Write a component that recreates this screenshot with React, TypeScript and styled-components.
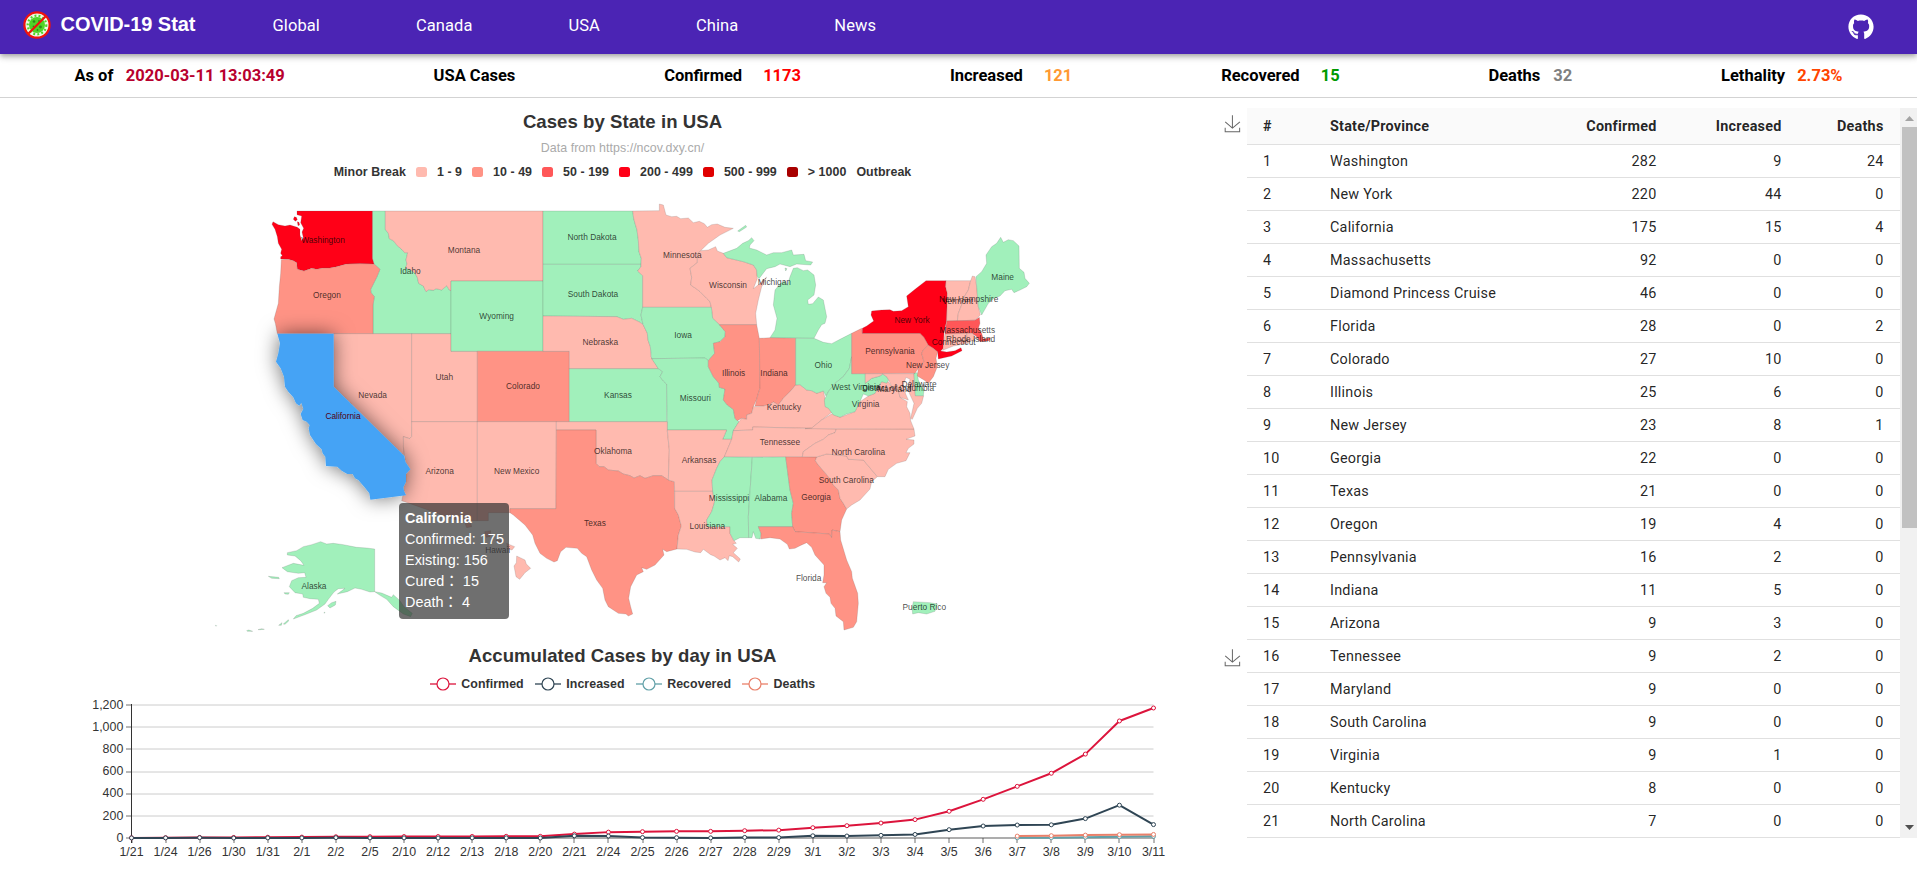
import React from "react";
import styled, { createGlobalStyle } from "styled-components";
import { FaGithub } from "react-icons/fa";

const GlobalStyle = createGlobalStyle`
  *, *::before, *::after { box-sizing: border-box; }
  body {
    margin: 0;
    background: #fff;
    color: #000;
    font-family: Roboto, "Liberation Sans", sans-serif;
    overflow: hidden;
  }
  svg { display: block; flex: none; }
`;

const Page = styled.div`
  display: flex;
  flex-direction: column;
  height: 877px;
`;

/* ---------- navigation ---------- */

const NavBar = styled.header`
  display: flex;
  align-items: center;
  height: 54px;
  flex: none;
  padding: 0 43.5px 0 23px;
  background: #4b24b4;
  color: #fff;
  box-shadow: 0 2px 4px -1px rgba(0, 0, 0, 0.2), 0 4px 5px rgba(0, 0, 0, 0.14), 0 1px 10px rgba(0, 0, 0, 0.12);
  z-index: 1;
`;

const Brand = styled.div`
  display: flex;
  align-items: center;
  gap: 9.5px;
  width: 249.5px;
  font: bold 20px/24px "Liberation Sans", sans-serif;
  letter-spacing: -0.05px;
  & > span { padding-bottom: 7px; }
  & > svg { margin-top: -4px; }
`;

const NavLinks = styled.nav`
  display: flex;
  gap: 96px;
  flex: 1;
`;

const NavLink = styled.a`
  font-size: 16.5px;
  line-height: 24px;
  letter-spacing: 0.08px;
  padding-bottom: 2px;
`;

/* ---------- totals ---------- */

const StatBar = styled.section`
  display: flex;
  justify-content: space-around;
  align-items: center;
  flex: none;
  height: 44px;
  padding-bottom: 1px;
  border-bottom: 1px solid #d3d3d3;
  font-size: 16.5px;
  font-weight: 700;
`;

const Stat = styled.div<{ $gap: number }>`
  display: flex;
  gap: ${(p) => p.$gap}px;
`;

const StatValue = styled.span<{ $color: string }>`
  color: ${(p) => p.$color};
`;

/* ---------- main area ---------- */

const Main = styled.main`
  display: flex;
  flex: 1;
  min-height: 0;
`;

const Charts = styled.div`
  width: 1247px;
  flex: none;
  font-family: "Liberation Sans", sans-serif;
  color: #333;
`;

const ChartBox = styled.section<{ $height: number }>`
  position: relative;
  display: flex;
  flex-direction: column;
  width: 1245px;
  height: ${(p) => p.$height}px;
`;

const ChartTitle = styled.h2`
  margin: 0;
  padding-top: 13px;
  font-size: 18.6px;
  line-height: 22px;
  font-weight: bold;
  letter-spacing: 0.04px;
  text-align: center;
`;

const ChartSubtitle = styled.div`
  margin-top: 7px;
  color: #aaa;
  font-size: 12.4px;
  line-height: 16px;
  letter-spacing: 0.04px;
  text-align: center;
`;

const Legend = styled.div<{ $top: number; $gap: number }>`
  display: flex;
  justify-content: center;
  align-items: center;
  gap: ${(p) => p.$gap}px;
  height: 14px;
  flex: none;
  margin-top: ${(p) => p.$top}px;
  font-size: 12.4px;
  line-height: 14px;
  font-weight: bold;
  letter-spacing: 0.06px;
`;

const Swatch = styled.i<{ $color: string }>`
  width: 11px;
  height: 10px;
  border-radius: 2.5px;
  background: ${(p) => p.$color};
`;

const LegendItem = styled.div`
  display: flex;
  align-items: center;
  gap: 5.5px;
`;

const MapSvg = styled.svg`
  margin-top: 6px;
`;

const DailySvg = styled.svg`
  margin-top: 2px;
`;

const SaveButton = styled.button`
  position: absolute;
  top: 17px;
  left: 1225px;
  padding: 0;
  border: 0;
  background: none;
`;

const Tooltip = styled.div`
  position: absolute;
  left: 399px;
  top: 405px;
  width: 110px;
  height: 116px;
  padding: 5px 0 5px 6px;
  border-radius: 4px;
  background: rgba(50, 50, 50, 0.7);
  color: #fff;
  font: 14.4px/21px "Liberation Sans", "Noto Sans CJK JP", sans-serif;
  letter-spacing: 0.04px;
  white-space: nowrap;
  & > div { height: 21px; }
`;

/* ---------- table ---------- */

const TablePane = styled.section`
  display: flex;
  width: 670px;
  height: 730px;
  margin-top: 10px;
`;

const Table = styled.table`
  width: 653px;
  height: 730px;
  border-collapse: separate;
  border-spacing: 0;
  table-layout: fixed;
  font-size: 14.4px;
  line-height: 20px;
  letter-spacing: 0.22px;
  color: rgba(0, 0, 0, 0.87);
`;

const Cell = styled.td<{ $right?: boolean }>`
  height: 33px;
  padding: 2px 16.5px 0 17px;
  border-bottom: 1px solid #e0e0e0;
  text-align: ${(p) => (p.$right ? "right" : "left")};
  white-space: nowrap;
  &:first-child { padding-left: 16px; }
`;

const HeadCell = styled(Cell).attrs({ as: "th" })`
  height: 37px;
  background: #fafafa;
  font-weight: 700;
`;

const ScrollTrack = styled.div`
  display: flex;
  flex-direction: column;
  align-items: center;
  width: 17px;
  background: #f1f1f1;
`;

const ScrollThumb = styled.div`
  width: 15px;
  height: 401px;
  margin-left: 2px;
  margin-bottom: auto;
  background: #c1c1c1;
`;

const ScrollArrow = styled.svg`
  width: 17px;
  height: 19px;
`;

/* ---------- data ---------- */

const NONE = "#a1f0bb";
const L1 = "#ffbaaf";
const L2 = "#ff9385";
const L3 = "#ff5758";
const L4 = "#ff0017";
const L5 = "#e00000";
const L6 = "#a80000";

type Region = [name: string, fill: string, x: number, y: number, shape: string];

const REGIONS: Region[] = [
  ["Idaho", NONE, 451, 244, "M337 63L376 63 376 118 385 130 388 146 400 152 412 167 425 178 434 188 443 188 438 210 441 222 436 235 450 238 465 250 472 262 476 280 490 288 498 305 506 299 520 301 528 296 545 300 560 287 568 300 573 302 573 431 339 431 339 345 343 320 333 308 332 298 350 262 360 238 342 222 337 205Z"],
  ["Montana", L1, 612, 181, "M376 63L849 63 849 273 573 273 573 302 568 300 560 287 545 300 528 296 520 301 506 299 498 305 490 288 476 280 472 262 465 250 450 238 436 235 441 222 438 210 443 188 434 188 425 178 412 167 400 152 388 146 385 130 376 118Z"],
  ["Washington", L4, 189, 151, "M111 63L337 63 337 205 342 222 300 221 260 222 230 230 210 234 190 234 170 238 155 235 132 243 112 238 110 218 100 212 85 208 62 207 62 200 67 197 62 190 65 178 55 160 52 140 45 118 36 103 39 95 55 104 75 108 90 105 100 108 112 112 120 118 120 135 125 152 130 143 126 126 131 115 122 98 125 78 111 74ZM103 80L109 82 112 89 106 94 100 88ZM112 95L117 97 119 105 114 107Z"],
  ["Oregon", L2, 201, 316, "M64 209L85 208 100 212 110 218 112 238 132 243 155 235 170 238 190 234 210 234 230 230 260 222 300 221 342 222 360 238 350 262 332 298 333 308 343 320 339 345 339 431 52 431 46 400 42 387 55 340 58 290 62 250Z"],
  ["Nevada", L1, 338, 614, "M221 431L455 431 455 740 449 746 430 740 433 798 221 590Z"],
  ["Utah", L1, 553, 560, "M455 431L573 431 573 484 652 484 652 695 455 695Z"],
  ["Wyoming", NONE, 710, 377, "M573 273L849 273 849 484 573 484Z"],
  ["Colorado", L2, 789, 587, "M652 484L928 484 928 695 652 695Z"],
  ["Arizona", L1, 539, 843, "M455 695L652 695 652 992 595 992 425 932 432 902 430 892 438 875 438 852 451 838 436 815 430 770 430 740 449 746 455 740Z"],
  ["New Mexico", L1, 770, 843, "M652 695L889 695 888 956 750 956 750 968 685 968 685 992 652 992Z"],
  ["North Dakota", NONE, 996, 142, "M849 63L1118 63 1121 85 1125 100 1131 120 1135 150 1137 185 1144 205 1143 223 849 223Z"],
  ["South Dakota", NONE, 999, 313, "M849 223L1143 223 1143 230 1133 243 1148 257 1148 352 1143 375 1149 403 1140 397 1115 385 1090 388 1070 380 849 378Z"],
  ["Nebraska", L1, 1021, 455, "M849 378L1070 380 1090 388 1115 385 1140 397 1150 405 1162 430 1164 450 1171 470 1173 500 1186 520 1195 536 928 536 928 484 849 484Z"],
  ["Kansas", NONE, 1074, 614, "M928 536L1195 536 1208 545 1200 560 1210 573 1220 582 1220 695 928 695Z"],
  ["Minnesota", L1, 1267, 196, "M1118 63L1198 62 1198 42 1210 45 1218 75 1235 80 1250 79 1262 86 1285 84 1300 98 1318 94 1333 101 1342 112 1355 104 1372 102 1395 112 1420 115 1380 135 1345 160 1322 182 1312 192 1312 218 1290 235 1295 262 1292 285 1310 297 1320 305 1340 325 1350 335 1354 352 1148 352 1148 257 1133 243 1143 230 1144 205 1137 185 1135 150 1131 120 1125 100 1121 85Z"],
  ["Wisconsin", L1, 1404, 286, "M1322 182L1345 180 1367 170 1372 183 1390 190 1400 203 1450 215 1480 225 1490 240 1492 266 1480 296 1497 283 1520 261 1505 290 1495 330 1487 370 1490 404 1378 404 1358 385 1354 352 1350 335 1340 325 1320 305 1310 297 1292 285 1295 262 1290 235 1312 218 1312 192Z"],
  ["Michigan", NONE, 1543, 275, "M1390 190L1430 175 1448 160 1465 152 1475 143 1482 152 1470 165 1468 174 1490 180 1520 195 1540 188 1565 188 1595 180 1600 195 1632 193 1637 212 1658 216 1652 225 1610 222 1590 230 1560 222 1545 230 1520 236 1497 266 1491 258 1490 240 1480 225 1450 215 1400 203ZM1433 123L1457 106 1460 111 1438 125ZM1575 234L1581 236 1577 243ZM1600 235L1612 233 1630 242 1643 240 1662 255 1667 285 1662 315 1643 330 1645 343 1658 341 1675 321 1690 330 1700 380 1695 400 1685 404 1675 420 1662 445 1530 443 1545 420 1551 385 1540 345 1545 300 1562 280 1575 272 1582 286 1590 260Z"],
  ["Iowa", NONE, 1269, 434, "M1148 352L1354 352 1358 385 1378 404 1396 425 1395 440 1380 455 1360 460 1364 490 1345 512 1335 504 1175 506 1171 470 1164 450 1162 430 1149 403 1143 375Z"],
  ["Missouri", NONE, 1306, 623, "M1175 506L1335 504 1345 512 1345 530 1360 560 1377 580 1378 592 1395 597 1390 630 1402 645 1420 658 1425 685 1437 695 1420 722 1415 748 1388 748 1400 720 1222 720 1220 582 1210 573 1200 560 1208 545 1195 536Z"],
  ["Illinois", L2, 1421, 548, "M1378 404L1490 404 1498 445 1500 595 1495 610 1490 628 1480 650 1475 670 1460 675 1460 688 1445 685 1432 692 1425 685 1420 658 1402 645 1390 630 1395 597 1378 592 1377 580 1360 560 1345 530 1345 512 1364 490 1360 460 1380 455 1395 440 1396 425Z"],
  ["Indiana", L2, 1542, 548, "M1498 445L1530 443 1607 445 1607 585 1590 605 1570 625 1555 645 1540 636 1530 643 1510 648 1485 648 1490 628 1495 610 1500 595Z"],
  ["Kentucky", L1, 1572, 650, "M1607 585L1620 584 1640 600 1655 602 1670 610 1690 603 1695 625 1705 645 1718 665 1685 690 1655 715 1478 711 1478 720 1420 722 1437 695 1445 685 1460 688 1460 675 1475 670 1480 650 1510 648 1530 643 1540 636 1555 645 1570 625 1590 605Z"],
  ["Ohio", NONE, 1690, 524, "M1607 445L1662 445 1690 457 1715 461 1740 448 1775 430 1775 500 1768 535 1750 560 1725 580 1705 605 1698 618 1690 603 1670 610 1655 602 1640 600 1620 584 1607 585Z"],
  ["Oklahoma", L1, 1059, 783, "M889 695L1222 695 1222 725 1228 780 1225 870 1205 857 1180 857 1155 865 1140 857 1122 864 1110 857 1090 852 1075 843 1045 840 1032 830 1018 830 1008 820 1008 720 889 720Z"],
  ["Texas", L2, 1005, 999, "M889 720L1008 720 1008 820 1018 830 1032 830 1045 840 1075 843 1090 852 1110 857 1122 864 1140 857 1155 865 1180 857 1205 857 1225 870 1243 875 1244 955 1255 975 1264 1008 1255 1035 1251 1077 1220 1085 1208 1078 1212 1095 1185 1125 1160 1138 1145 1133 1150 1145 1130 1155 1112 1190 1106 1225 1112 1250 1118 1272 1105 1278 1098 1272 1075 1270 1045 1250 1035 1230 1028 1195 1010 1170 995 1140 980 1100 965 1090 952 1075 918 1072 902 1085 892 1112 882 1116 860 1105 840 1090 825 1060 818 1035 795 1005 760 975 750 968 750 956 888 956Z"],
  ["Arkansas", L1, 1317, 810, "M1222 720L1400 720 1388 748 1415 748 1410 760 1400 785 1393 800 1380 815 1370 835 1356 870 1358 904 1244 904 1243 875 1225 870 1228 780Z"],
  ["Louisiana", L1, 1342, 1008, "M1244 904L1358 904 1364 935 1355 965 1340 990 1342 1010 1410 1010 1410 1030 1420 1050 1429 1060 1418 1063 1432 1075 1420 1088 1441 1107 1436 1116 1418 1100 1408 1097 1404 1112 1395 1103 1380 1110 1362 1098 1352 1094 1330 1078 1322 1088 1305 1086 1280 1078 1251 1077 1255 1035 1264 1008 1255 975 1244 955Z"],
  ["Mississippi", NONE, 1407, 924, "M1393 800L1477 802 1465 980 1466 1043 1440 1043 1422 1052 1410 1030 1410 1010 1342 1010 1340 990 1355 965 1364 935 1358 904 1356 870 1370 835 1380 815Z"],
  ["Alabama", NONE, 1533, 924, "M1477 802L1577 800 1590 900 1600 940 1595 970 1598 1010 1495 1010 1503 1030 1500 1047 1487 1045 1480 1025 1476 1043 1466 1043 1465 980Z"],
  ["Georgia", L2, 1668, 921, "M1577 800L1670 801 1666 812 1675 825 1690 842 1705 860 1720 885 1735 900 1740 925 1750 940 1760 957 1745 990 1740 1025 1716 1020 1715 1043 1708 1032 1605 1025 1598 1010 1595 970 1600 940 1590 900Z"],
  ["Florida", L2, 1646, 1164, "M1495 1010L1598 1010 1605 1025 1708 1032 1715 1043 1716 1020 1740 1025 1742 1050 1760 1110 1775 1145 1777 1165 1793 1210 1795 1240 1790 1295 1780 1312 1752 1320 1750 1295 1728 1278 1725 1255 1713 1240 1710 1222 1698 1210 1692 1190 1700 1178 1688 1178 1692 1155 1692 1125 1665 1095 1655 1072 1640 1058 1620 1067 1605 1075 1588 1077 1582 1063 1560 1047 1530 1043 1502 1047 1503 1030Z"],
  ["Tennessee", L1, 1560, 756, "M1478 711L1729 717 1725 728 1705 735 1690 748 1665 760 1630 785 1627 800 1393 800 1410 760 1415 748 1420 722 1478 720Z"],
  ["South Carolina", L1, 1759, 870, "M1666 812L1670 801 1700 792 1760 798 1765 808 1810 810 1852 860 1835 875 1830 897 1800 930 1775 945 1760 957 1750 940 1740 925 1735 900 1720 885 1705 860 1690 842 1675 825Z"],
  ["North Carolina", L1, 1795, 786, "M1729 717L1962 717 1965 738 1938 748 1962 750 1962 762 1945 775 1938 788 1950 788 1938 812 1910 820 1885 838 1875 860 1852 860 1810 810 1765 808 1760 798 1700 792 1670 801 1627 800 1630 785 1665 760 1690 748 1705 735 1725 728Z"],
  ["Virginia", L1, 1817, 641, "M1635 716L1655 714 1685 690 1718 670 1740 682 1785 665 1800 635 1825 618 1845 610 1865 575 1885 575 1895 590 1915 600 1920 622 1942 635 1940 650 1950 670 1952 692 1962 717Z"],
  ["West Virginia", NONE, 1788, 590, "M1775 500L1775 551 1816 551 1816 580 1835 565 1860 558 1868 552 1880 560 1886 570 1880 580 1865 575 1855 590 1845 610 1825 618 1810 612 1800 635 1785 665 1760 672 1740 682 1720 675 1705 655 1695 650 1693 630 1705 605 1725 580 1750 560 1768 535Z"],
  ["District of Columbia", L1, 1914, 593, "M1908 592L1914 597 1909 602Z"],
  ["Maryland", L1, 1903, 597, "M1816 551L1962 551 1966 617 1991 617 1985 640 1972 655 1957 688 1952 685 1962 640 1948 610 1945 590 1950 568 1938 562 1930 585 1937 612 1945 630 1920 622 1915 600 1895 590 1886 570 1880 560 1868 552 1860 558 1835 565 1816 580Z"],
  ["Delaware", NONE, 1977, 581, "M1962 549L1972 548 1975 570 1985 590 1992 600 1990 617 1966 617Z"],
  ["Pennsylvania", L2, 1890, 482, "M1775 430L1805 415 1807 430 1980 430 1992 442 2005 465 1990 480 1985 490 1992 515 1975 535 1965 550 1775 551Z"],
  ["New Jersey", L2, 2003, 524, "M2005 465L2033 485 2028 505 2032 530 2020 560 2005 580 1992 570 1972 558 1975 535 1992 515 1985 490 1990 480Z"],
  ["New York", L4, 1956, 389, "M1807 415L1820 408 1841 393 1833 375 1835 363 1865 360 1890 359 1900 364 1925 362 1945 350 1940 318 1965 298 1998 272 2058 272 2057 290 2062 310 2060 390 2052 430 2050 475 2042 483 2060 486 2085 482 2103 473 2106 482 2075 498 2035 507 2033 485 2020 475 2005 465 1992 442 1980 430 1807 430Z"],
  ["Vermont", L1, 2093, 332, "M2058 272L2132 272 2125 300 2110 325 2105 345 2095 370 2092 393 2060 393 2062 310 2057 290Z"],
  ["New Hampshire", L1, 2126, 326, "M2132 272L2137 258 2145 260 2150 290 2155 350 2161 375 2145 390 2092 393 2095 370 2105 345 2110 325 2125 300Z"],
  ["Maine", NONE, 2228, 260, "M2148 260L2165 245 2180 220 2178 195 2195 170 2210 160 2222 142 2230 157 2245 149 2260 152 2277 168 2278 235 2292 247 2295 265 2308 280 2300 290 2280 300 2262 308 2255 298 2235 302 2220 318 2200 326 2185 340 2165 375 2155 350 2150 290Z"],
  ["Massachusetts", L3, 2122, 419, "M2060 393L2145 391 2158 382 2160 400 2155 415 2165 430 2170 447 2192 443 2187 452 2160 455 2148 438 2135 430 2055 432Z"],
  ["Connecticut", L1, 2081, 455, "M2055 432L2120 430 2122 460 2080 468 2048 481Z"],
  ["Rhode Island", L1, 2132, 446, "M2120 430L2138 430 2148 445 2122 460Z"],
  ["Puerto Rico", NONE, 1993, 1251, "M1960 1235L2010 1238 2032 1242 2025 1264 2000 1272 1975 1268 1958 1272 1956 1255Z"],
  ["Hawaii", L1, 713, 1081, "M615 1000L632 998 635 1010 620 1013ZM674 1025L692 1022 690 1040 678 1042ZM708 1050L726 1052 724 1056 710 1055ZM740 1060L764 1070 756 1080 742 1076ZM770 1098L795 1110 799 1122 812 1135 795 1148 779 1168 768 1160 762 1128 769 1118Z"],
  ["Alaska", NONE, 162, 1188, "M82 1088L110 1082 130 1070 155 1064 182 1055 200 1062 220 1060 250 1064 290 1072 320 1074 344 1077 344 1205 330 1206 305 1198 285 1194 262 1205 232 1212 255 1195 235 1196 222 1206 205 1228 195 1242 170 1260 140 1272 100 1287 108 1277 130 1270 158 1255 178 1240 175 1228 150 1226 130 1222 128 1212 105 1208 88 1190 95 1172 115 1163 138 1162 134 1148 115 1150 82 1145 66 1133 100 1120 132 1126 122 1112 105 1098 82 1095ZM344 1205L365 1209 395 1222 400 1214 420 1232 432 1250 457 1270 452 1280 430 1272 400 1250 380 1228 360 1216ZM203 1247L215 1238 228 1234 226 1245 210 1254ZM25 1159L56 1162 58 1166 35 1165ZM72 1208L88 1208 85 1213 75 1212ZM56 1306L66 1298 64 1306ZM70 1302L85 1289 86 1293 75 1303ZM-6 1319L5 1316 13 1318 0 1319ZM-40 1322L-34 1320 -22 1324 -38 1324ZM-134 1306L-130 1307 -132 1309ZM192 1267L195 1267 193 1270Z"],
];

const CALIFORNIA =
  "M52 431L221 431 221 590 433 798 436 815 451 838 438 852 438 875 430 892 432 902 438 916 331 929 328 910 315 893 295 870 285 865 278 852 262 852 245 842 232 830 198 828 196 800 188 790 185 778 168 762 150 735 146 715 149 705 140 695 128 690 122 672 130 657 124 638 118 647 108 640 100 622 85 605 75 590 72 560 62 535 48 515 55 490 60 460Z";

const MAP_LEGEND: [string, string][] = [
  [L1, "1 - 9"], [L2, "10 - 49"], [L3, "50 - 199"], [L4, "200 - 499"], [L5, "500 - 999"], [L6, "> 1000"],
];

const DAYS = [
  "1/21", "1/24", "1/26", "1/30", "1/31", "2/1", "2/2", "2/5", "2/10", "2/12", "2/13", "2/18", "2/20", "2/21", "2/24", "2/25",
  "2/26", "2/27", "2/28", "2/29", "3/1", "3/2", "3/3", "3/4", "3/5", "3/6", "3/7", "3/8", "3/9", "3/10", "3/11",
];

const SERIES: { name: string; color: string; start: number; values: number[] }[] = [
  {
    name: "Confirmed", color: "#dc143c", start: 0,
    values: [1, 2, 5, 5, 7, 8, 11, 12, 13, 13, 14, 15, 15, 35, 53, 57, 60, 60, 66, 71, 93, 111, 135, 166, 241, 349, 466, 584, 757, 1056, 1173],
  },
  {
    name: "Increased", color: "#2f4554", start: 0,
    values: [1, 1, 3, 0, 1, 1, 3, 1, 1, 0, 1, 1, 0, 20, 18, 4, 3, 1, 5, 4, 20, 18, 24, 32, 75, 108, 117, 119, 175, 296, 121],
  },
  { name: "Recovered", color: "#61a0a8", start: 26, values: [2, 3, 7, 12, 15] },
  { name: "Deaths", color: "#e9806a", start: 26, values: [17, 21, 26, 30, 32] },
];

const ROWS: [string, number, number, number][] = [
  ["Washington", 282, 9, 24], ["New York", 220, 44, 0], ["California", 175, 15, 4], ["Massachusetts", 92, 0, 0],
  ["Diamond Princess Cruise", 46, 0, 0], ["Florida", 28, 0, 2], ["Colorado", 27, 10, 0], ["Illinois", 25, 6, 0],
  ["New Jersey", 23, 8, 1], ["Georgia", 22, 0, 0], ["Texas", 21, 0, 0], ["Oregon", 19, 4, 0], ["Pennsylvania", 16, 2, 0],
  ["Indiana", 11, 5, 0], ["Arizona", 9, 3, 0], ["Tennessee", 9, 2, 0], ["Maryland", 9, 0, 0], ["South Carolina", 9, 0, 0],
  ["Virginia", 9, 1, 0], ["Kentucky", 8, 0, 0], ["North Carolina", 7, 0, 0],
];

const STATS: { label: string; value?: string; color?: string; gap?: number }[] = [
  { label: "As of", value: "2020-03-11 13:03:49", color: "#b8002e", gap: 12.5 },
  { label: "USA Cases" },
  { label: "Confirmed", value: "1173", color: "#ff0000", gap: 21 },
  { label: "Increased", value: "121", color: "#ff9933", gap: 21 },
  { label: "Recovered", value: "15", color: "#009900", gap: 21 },
  { label: "Deaths", value: "32", color: "#808080", gap: 13 },
  { label: "Lethality", value: "2.73%", color: "#ff4500", gap: 12 },
];

/* ---------- pieces ---------- */

const VirusLogo = () => (
  <svg width="28" height="28" viewBox="0 0 28 28">
    <circle cx="14" cy="14" r="13" fill="#eef9e6" />
    <circle cx="14" cy="14" r="8" fill="#4fd327" />
    <circle cx="14" cy="14" r="9.3" fill="none" stroke="#4fd327" strokeWidth="2.2" strokeDasharray="1.9 2.2" />
    <g fill="#2a8c17">
      <circle cx="11" cy="10.5" r="1.3" />
      <circle cx="17.5" cy="16" r="1.4" />
      <circle cx="16" cy="10" r="0.9" />
      <circle cx="10.5" cy="15.5" r="0.9" />
      <circle cx="14.5" cy="19" r="0.9" />
    </g>
    <circle cx="14" cy="14" r="12.6" fill="none" stroke="#f0120c" strokeWidth="2.2" />
    <path d="M22.5 5.5L5.5 22.5" stroke="#f0120c" strokeWidth="2.2" />
  </svg>
);

const SaveIcon = () => (
  <SaveButton aria-label="Save as image">
    <svg width="15" height="17" viewBox="4 -1 51 60" preserveAspectRatio="none" fill="none" stroke="#666" overflow="visible">
      <path
        vectorEffect="non-scaling-stroke"
        d="M4.7,22.9L29.3,45.5L54.7,23.4M4.6,43.6L4.6,58L53.8,58L53.8,43.6M29.2,45.1L29.2,0"
      />
    </svg>
  </SaveButton>
);

const StateMap = () => (
  <MapSvg width="1240" height="447" viewBox="-780 -15 3720 1341">
    <defs>
      <filter id="lift" x="-40%" y="-40%" width="180%" height="180%">
        <feDropShadow dx="0" dy="0" stdDeviation="30" floodColor="#000" floodOpacity="0.55" />
      </filter>
    </defs>
    <g stroke="#555" strokeOpacity="0.38" strokeWidth="1.4" strokeLinejoin="round">
      {REGIONS.map(([name, fill, , , shape]) => (
        <path key={name} d={shape} fill={fill} />
      ))}
    </g>
    <path d={CALIFORNIA} fill="#44a3f5" filter="url(#lift)" />
    <g fontFamily="Liberation Sans, sans-serif" fontSize="25" textAnchor="middle" fill="#000" fillOpacity="0.72">
      {REGIONS.map(([name, , x, y]) => (
        <text key={name} x={x} y={y + 9}>{name}</text>
      ))}
      <text x="249" y="687" fill="#500014" fillOpacity="1">California</text>
    </g>
  </MapSvg>
);

const X0 = 131.5;
const STEP = 1022 / 30;
const yOf = (v: number) => 838 - (v * 133) / 1200;

const DailyChart = () => (
  <DailySvg width="1245" height="180" viewBox="0 693 1245 180">
    {[200, 400, 600, 800, 1000, 1200].map((v) => (
      <path key={v} d={`M132 ${Math.round(yOf(v))}H1153.5`} stroke="#ccc" />
    ))}
    <path d="M131.5 704V843" stroke="#333" />
    <path d="M131 838H1154" stroke="#333" strokeWidth="1.2" strokeOpacity="0.8" />
    <g fontSize="12.400" fill="#333">
      {[0, 200, 400, 600, 800, 1000, 1200].map((v) => (
        <React.Fragment key={v}>
          <path d={`M126 ${Math.round(yOf(v))}H131.5`} stroke="#333" strokeOpacity="0.7" />
          <text x="123.300" y={yOf(v) + 3.7} textAnchor="end">{v.toLocaleString("en-US")}</text>
        </React.Fragment>
      ))}
      {DAYS.map((d, i) => (
        <React.Fragment key={d}>
          <path d={`M${Math.round(X0 + i * STEP)} 838V843`} stroke="#333" strokeOpacity="0.7" />
          <text x={X0 + i * STEP} y="856" textAnchor="middle">{d}</text>
        </React.Fragment>
      ))}
    </g>
    {SERIES.map((s) => (
      <g key={s.name} stroke={s.color} fill="none">
        <polyline
          strokeWidth="2"
          strokeLinejoin="round"
          points={s.values.map((v, i) => `${X0 + (s.start + i) * STEP},${yOf(v)}`).join(" ")}
        />
        {s.values.map((v, i) => (
          <circle key={i} cx={X0 + (s.start + i) * STEP} cy={yOf(v)} r="2" fill="#fff" />
        ))}
      </g>
    ))}
  </DailySvg>
);

export default function App() {
  return (
    <Page>
      <GlobalStyle />
      <NavBar>
        <Brand>
          <VirusLogo />
          <span>COVID-19 Stat</span>
        </Brand>
        <NavLinks>
          {["Global", "Canada", "USA", "China", "News"].map((t) => (
            <NavLink key={t}>{t}</NavLink>
          ))}
        </NavLinks>
        <FaGithub size={26} />
      </NavBar>

      <StatBar>
        {STATS.map((s) => (
          <Stat key={s.label} $gap={s.gap ?? 0}>
            <span>{s.label}</span>
            {s.value && <StatValue $color={s.color!}>{s.value}</StatValue>}
          </Stat>
        ))}
      </StatBar>

      <Main>
        <Charts>
          <ChartBox $height={534}>
            <ChartTitle>Cases by State in USA</ChartTitle>
            <ChartSubtitle>Data from https://ncov.dxy.cn/</ChartSubtitle>
            <Legend $top={9} $gap={10}>
              <span>Minor Break</span>
              {MAP_LEGEND.map(([color, label]) => (
                <React.Fragment key={label}>
                  <Swatch $color={color} />
                  <span>{label}</span>
                </React.Fragment>
              ))}
              <span>Outbreak</span>
            </Legend>
            <StateMap />
            <SaveIcon />
            <Tooltip>
              <div><b>California</b></div>
              <div>Confirmed: 175</div>
              <div>Existing: 156</div>
              <div>Cured： 15</div>
              <div>Death： 4</div>
            </Tooltip>
          </ChartBox>
          <ChartBox $height={245}>
            <ChartTitle>Accumulated Cases by day in USA</ChartTitle>
            <Legend $top={10} $gap={11}>
              {SERIES.map((s) => (
                <LegendItem key={s.name}>
                  <svg width="26" height="14" stroke={s.color}>
                    <path d="M0 7H26" strokeWidth="1.3" />
                    <circle cx="13" cy="7" r="6" fill="#fff" strokeWidth="1.2" />
                  </svg>
                  <span>{s.name}</span>
                </LegendItem>
              ))}
            </Legend>
            <DailyChart />
            <SaveIcon />
          </ChartBox>
        </Charts>

        <TablePane>
          <Table>
            <colgroup>
              <col width="66" />
              <col width="218" />
              <col width="142" />
              <col width="125" />
              <col width="102" />
            </colgroup>
            <thead>
              <tr>
                <HeadCell>#</HeadCell>
                <HeadCell>State/Province</HeadCell>
                <HeadCell $right>Confirmed</HeadCell>
                <HeadCell $right>Increased</HeadCell>
                <HeadCell $right>Deaths</HeadCell>
              </tr>
            </thead>
            <tbody>
              {ROWS.map(([name, confirmed, increased, deaths], i) => (
                <tr key={name}>
                  <Cell>{i + 1}</Cell>
                  <Cell>{name}</Cell>
                  <Cell $right>{confirmed}</Cell>
                  <Cell $right>{increased}</Cell>
                  <Cell $right>{deaths}</Cell>
                </tr>
              ))}
            </tbody>
          </Table>
          <ScrollTrack>
            <ScrollArrow viewBox="0 0 17 19"><path d="M5 13L9.500 8 14 13Z" fill="#a3a3a3" /></ScrollArrow>
            <ScrollThumb />
            <ScrollArrow viewBox="0 0 17 19"><path d="M5 6L9.500 11 14 6Z" fill="#505050" /></ScrollArrow>
          </ScrollTrack>
        </TablePane>
      </Main>
    </Page>
  );
}
